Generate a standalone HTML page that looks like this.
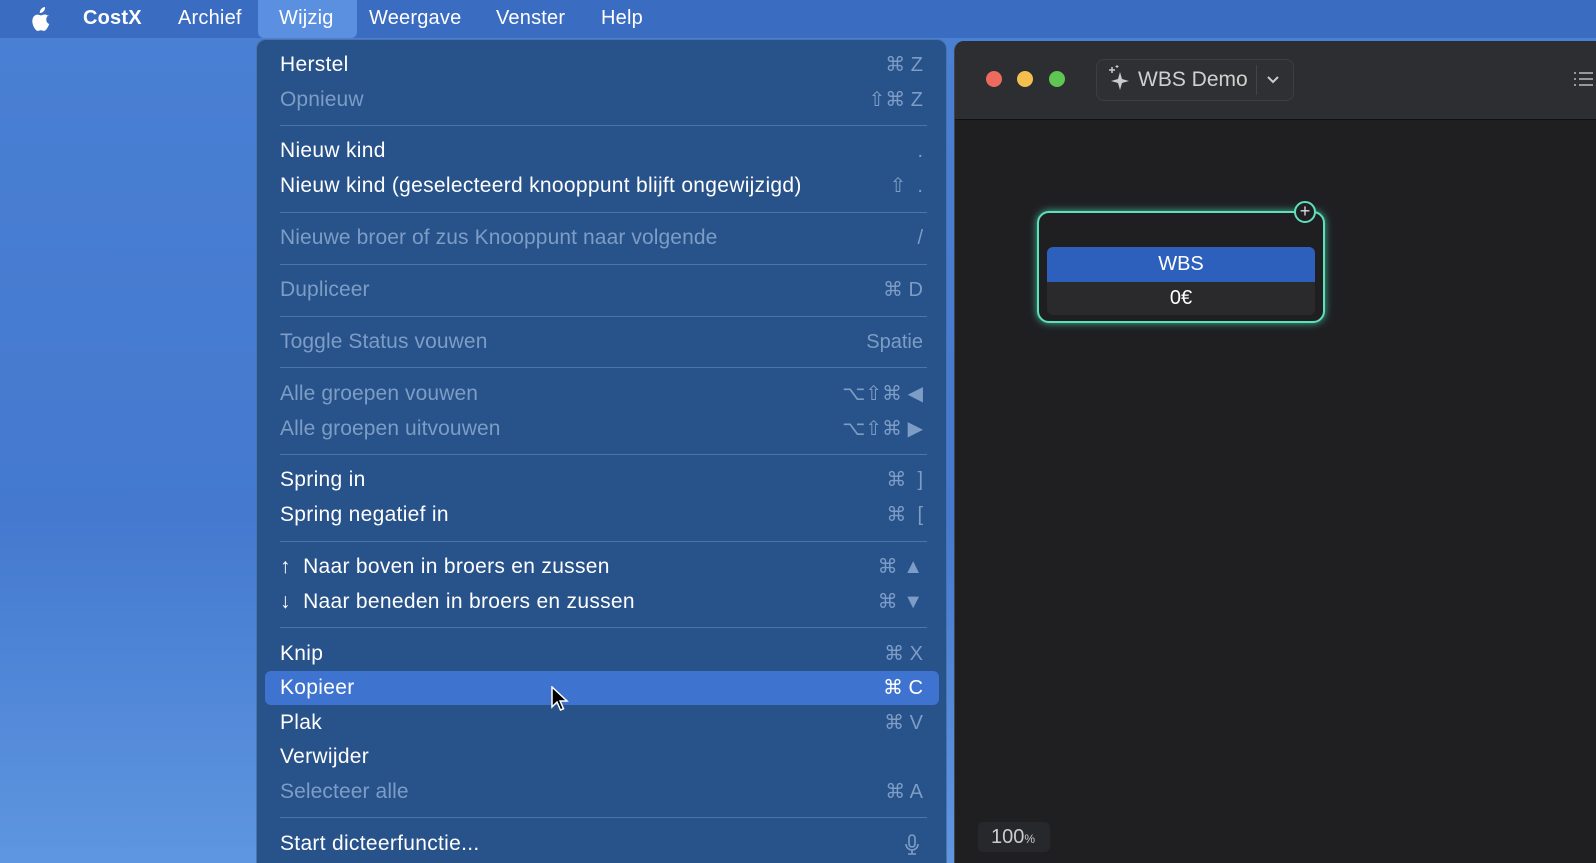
<!DOCTYPE html>
<html><head><meta charset="utf-8"><style>
*{margin:0;padding:0;box-sizing:border-box}
html,body{width:1596px;height:863px;overflow:hidden}
body{position:relative;font-family:"Liberation Sans",sans-serif;background:linear-gradient(180deg,#4a80d4 0%,#4479cf 60%,#5f96e0 100%)}
.bar{position:absolute;left:0;top:0;width:1596px;height:38px;background:#3a6cc2}
.bar span{position:absolute;top:7px;font-size:20px;color:#fff;letter-spacing:0.2px}
.wsel{position:absolute;left:258px;top:0;width:99px;height:38px;background:#5b8fe0;border-radius:0 0 6px 6px}
.menu{position:absolute;left:256px;top:39px;width:691px;height:824px;background:#27528a;border-radius:10px 10px 0 0;border:1px solid #4a74aa;border-bottom:none}
.it{position:absolute;left:23px;font-size:21px;letter-spacing:0.3px;color:#fff;white-space:nowrap;line-height:24px}
.it.d{color:#7d9dc6;letter-spacing:0.1px}
.sc{position:absolute;right:23px;font-size:20px;color:#7d9dc6;white-space:nowrap;line-height:24px;text-align:right}
.sep{position:absolute;left:23px;width:647px;height:1px;background:#4d74a7}
.hl{position:absolute;left:8px;top:631px;width:674px;height:34px;background:#3e74cf;border-radius:6px}
.win{position:absolute;left:954px;top:41px;width:642px;height:822px;background:#1f1f22;border-left:1px solid #444;border-radius:10px 0 0 0;overflow:hidden}
.tb{position:absolute;left:0;top:0;width:100%;height:79px;background:#2d2e31;border-bottom:1px solid #111}
.dot{position:absolute;top:30px;width:16px;height:16px;border-radius:50%}
</style></head><body>
<div class="bar">
<div class="wsel"></div>
<svg style="position:absolute;left:31px;top:7px" width="21" height="24" viewBox="0 0 21 24"><path d="M14 0c.2 1.8-.5 3.4-1.6 4.5-1 1-2.4 1.6-3.6 1.5-.2-1.6.6-3.3 1.6-4.3C11.4.7 12.9.1 14 0zM17.6 8.3c-1.9 1.2-2.3 3-2.3 4.4 0 2.4 1.6 3.7 2.9 4.3-.6 1.9-2 4.6-3.4 6-1 1-2 1.1-3.1.6-1.2-.5-2.3-.5-3.5 0-1.2.5-2.2.4-3.1-.5C2.7 20.7.7 16.2 1.5 12.3 2.1 9.3 4.3 7.6 6.5 7.6c1.3 0 2.4.8 3.4.8 1 0 2.1-.9 3.7-.9 1.3 0 3 .5 4 1.8z" fill="#fff"/></svg>
<span style="left:83px;font-weight:bold">CostX</span>
<span style="left:178px">Archief</span>
<span style="left:279px">Wijzig</span>
<span style="left:369px">Weergave</span>
<span style="left:496px">Venster</span>
<span style="left:601px">Help</span>
</div>
<div class="menu">
<div class="hl"></div>
<div class="it" style="top:13px">Herstel</div><div class="sc" style="top:13px">⌘ Z</div>
<div class="it d" style="top:48px">Opnieuw</div><div class="sc" style="top:48px">⇧⌘ Z</div>
<div class="sep" style="top:85px"></div>
<div class="it" style="top:99px">Nieuw kind</div><div class="sc" style="top:99px">.</div>
<div class="it" style="top:134px">Nieuw kind (geselecteerd knooppunt blijft ongewijzigd)</div><div class="sc" style="top:134px">⇧ &nbsp;.</div>
<div class="sep" style="top:172px"></div>
<div class="it d" style="top:186px">Nieuwe broer of zus Knooppunt naar volgende</div><div class="sc" style="top:186px">/</div>
<div class="sep" style="top:224px"></div>
<div class="it d" style="top:238px">Dupliceer</div><div class="sc" style="top:238px">⌘ D</div>
<div class="sep" style="top:276px"></div>
<div class="it d" style="top:290px">Toggle Status vouwen</div><div class="sc" style="top:290px">Spatie</div>
<div class="sep" style="top:327px"></div>
<div class="it d" style="top:342px">Alle groepen vouwen</div><div class="sc" style="top:342px">⌥⇧⌘ ◀</div>
<div class="it d" style="top:377px">Alle groepen uitvouwen</div><div class="sc" style="top:377px">⌥⇧⌘ ▶</div>
<div class="sep" style="top:414px"></div>
<div class="it" style="top:428px">Spring in</div><div class="sc" style="top:428px">⌘ &nbsp;]</div>
<div class="it" style="top:463px">Spring negatief in</div><div class="sc" style="top:463px">⌘ &nbsp;[</div>
<div class="sep" style="top:501px"></div>
<div class="it" style="top:515px">↑&nbsp; Naar boven in broers en zussen</div><div class="sc" style="top:515px">⌘ ▲</div>
<div class="it" style="top:550px">↓&nbsp; Naar beneden in broers en zussen</div><div class="sc" style="top:550px">⌘ ▼</div>
<div class="sep" style="top:587px"></div>
<div class="it" style="top:602px">Knip</div><div class="sc" style="top:602px">⌘ X</div>
<div class="it" style="top:636px">Kopieer</div><div class="sc" style="top:636px;color:#fff">⌘ C</div>
<div class="it" style="top:671px">Plak</div><div class="sc" style="top:671px">⌘ V</div>
<div class="it" style="top:705px">Verwijder</div>
<div class="it d" style="top:740px">Selecteer alle</div><div class="sc" style="top:740px">⌘ A</div>
<div class="sep" style="top:777px"></div>
<div class="it" style="top:792px">Start dicteerfunctie...</div>
<svg style="position:absolute;right:27px;top:794px" width="14" height="22" viewBox="0 0 14 22"><rect x="4" y="1" width="6" height="12" rx="3" fill="none" stroke="#7d9dc6" stroke-width="1.6"/><path d="M1 10a6 6 0 0 0 12 0M7 16v4M3 20h8" fill="none" stroke="#7d9dc6" stroke-width="1.6"/></svg>
<svg style="position:absolute;left:293px;top:646px" width="20" height="28" viewBox="0 0 20 28"><path d="M2 1v20l5-5 3.5 8 3-1.3-3.4-7.7H17z" fill="#000" stroke="#fff" stroke-width="1.5"/></svg>
</div>
<div class="win">
<div class="tb">
<div class="dot" style="left:31px;background:#ec6a5e"></div>
<div class="dot" style="left:62px;background:#f4bf4f"></div>
<div class="dot" style="left:94px;background:#61c554"></div>
<div style="position:absolute;left:141px;top:18px;width:198px;height:42px;border:1px solid #3d3e42;border-radius:8px;background:#2f3033"></div>
<svg style="position:absolute;left:152px;top:23px" width="26" height="30" viewBox="0 0 26 30"><path d="M13 8l2 7 7 2-7 2-2 7-2-7-7-2 7-2z" fill="#ccc"/><path d="M5 3v6M2 6h6" stroke="#ccc" stroke-width="1.5"/><path d="M10 1v3M8.5 2.5h3" stroke="#ccc" stroke-width="1"/></svg>
<div style="position:absolute;left:183px;top:27px;font-size:21px;color:#d0d0d0">WBS Demo</div>
<div style="position:absolute;left:301px;top:24px;width:1px;height:30px;background:#444"></div>
<svg style="position:absolute;left:311px;top:34px" width="14" height="10" viewBox="0 0 14 10"><path d="M2 2l5 5 5-5" fill="none" stroke="#ccc" stroke-width="2"/></svg>
<svg style="position:absolute;left:618px;top:28px" width="20" height="20" viewBox="0 0 20 20"><g stroke="#bbb" stroke-width="1.6"><path d="M6 4h14M6 10h14M6 16h14M1 4h2M1 10h2M1 16h2"/></g></svg>
</div>
<div style="position:absolute;left:82px;top:170px;width:288px;height:112px;border:2px solid #5fe0b8;border-radius:12px;box-shadow:0 0 8px #3fb592;background:#1f1f22">
<div style="position:absolute;left:8px;top:34px;width:268px;height:68px;background:#2a2a2c;border-radius:6px"></div>
<div style="position:absolute;left:8px;top:34px;width:268px;height:35px;background:#2d5fbd;border-radius:6px 6px 0 0;color:#fff;font-size:20px;text-align:center;line-height:35px">WBS</div>
<div style="position:absolute;left:8px;top:69px;width:268px;height:33px;color:#fff;font-size:20px;text-align:center;line-height:33px">0€</div>
</div>
<div style="position:absolute;left:339px;top:160px;width:22px;height:22px;border-radius:50%;border:2px solid #5fe0b8;background:#1f1f22;color:#ddd;font-size:18px;line-height:17px;text-align:center">+</div>
<div style="position:absolute;left:23px;top:781px;width:72px;height:30px;background:#27282b;border-radius:5px;color:#ccc;font-size:20px;line-height:30px;padding-left:13px">100<span style="font-size:12px">%</span></div>
</div>
</body></html>
